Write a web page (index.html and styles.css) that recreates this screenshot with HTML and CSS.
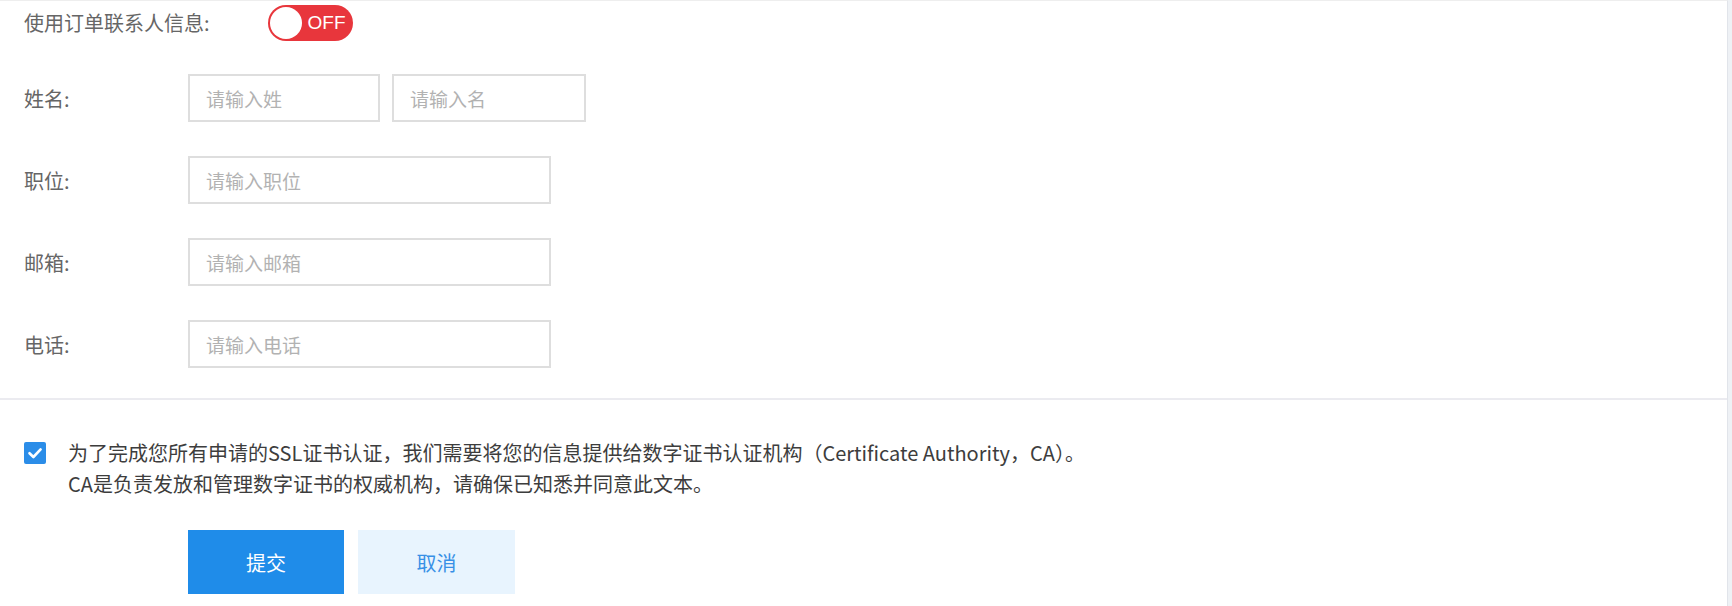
FILE: index.html
```html
<!DOCTYPE html>
<html lang="zh">
<head>
  <meta charset="UTF-8">
  <meta name="viewport" content="width=device-width, initial-scale=1.0">
  <title>联系人信息</title>
  <link rel="stylesheet" href="styles.css">
</head>
<body>
  <div class="page">
    <div class="panel">
      <section class="contactForm">
        <div class="switchRow">
          <span class="switchLabel">使用订单联系人信息:</span>
          <span class="switch">
            <span class="switchKnob"></span>
            <span class="switchText">OFF</span>
          </span>
        </div>

        <div class="formRow">
          <label class="fieldLabel">姓名:</label>
          <input class="textInput lastName" type="text" placeholder="请输入姓">
          <input class="textInput firstName" type="text" placeholder="请输入名">
        </div>

        <div class="formRow">
          <label class="fieldLabel">职位:</label>
          <input class="textInput wide" type="text" placeholder="请输入职位">
        </div>

        <div class="formRow">
          <label class="fieldLabel">邮箱:</label>
          <input class="textInput wide" type="text" placeholder="请输入邮箱">
        </div>

        <div class="formRow">
          <label class="fieldLabel">电话:</label>
          <input class="textInput wide" type="text" placeholder="请输入电话">
        </div>
      </section>

      <section class="agreement">
        <div class="agreeRow">
          <span class="checkbox">
            <svg width="22" height="22" viewBox="0 0 22 22">
              <path d="M5.5 11.2 L9.4 15 L16.6 7.4" fill="none" stroke="#fff" stroke-width="2.6" stroke-linecap="round" stroke-linejoin="round"/>
            </svg>
          </span>
          <p class="agreeText">
            为了完成您所有申请的SSL证书认证，我们需要将您的信息提供给数字证书认证机构（Certificate Authority，CA）。<br>
            CA是负责发放和管理数字证书的权威机构，请确保已知悉并同意此文本。
          </p>
        </div>

        <div class="actions">
          <button class="btn btnPrimary" type="button">提交</button>
          <button class="btn btnLight" type="button">取消</button>
        </div>
      </section>
    </div>
  </div>
</body>
</html>
```

FILE: styles.css
```css
html, body {
  margin: 0;
  padding: 0;
  background-color: #eef1f5;
  font-family: "Noto Sans CJK SC", "Noto Sans", sans-serif;
  color: #666666;
}

.page {
  display: flex;
  height: 606px;
  overflow: hidden;
}

.panel {
  width: 1727px;
  background-color: #ffffff;
  border-top: 1px solid #eeeeee;
  border-right: 1px solid #e1e4ea;
}

/* 联系人表单 */
.contactForm {
  padding: 4px 0 30px 24px;
}

.switchRow {
  display: flex;
  align-items: center;
  height: 36px;
  margin-bottom: 33px;
}

.switchLabel {
  width: 244px;
  font-size: 20px;
  line-height: 36px;
  color: #666666;
}

.switch {
  display: flex;
  align-items: center;
  width: 85px;
  height: 36px;
  padding: 2px;
  box-sizing: border-box;
  border-radius: 18px;
  background-color: #e8363c;
}

.switchKnob {
  width: 32px;
  height: 32px;
  border-radius: 50%;
  background-color: #ffffff;
}

.switchText {
  flex: 1;
  text-align: center;
  font-family: "Liberation Sans", Arial, sans-serif;
  font-size: 19px;
  color: #ffffff;
}

.formRow {
  display: flex;
  align-items: center;
  height: 48px;
  margin-bottom: 34px;
}

.formRow:last-child {
  margin-bottom: 0;
}

.fieldLabel {
  width: 164px;
  font-size: 20px;
  color: #666666;
}

.textInput {
  height: 48px;
  box-sizing: border-box;
  padding: 0 16px;
  border: 2px solid #dedede;
  border-radius: 0;
  outline: none;
  font-family: "Noto Sans CJK SC", "Noto Sans", sans-serif;
  font-size: 19px;
  color: #333333;
  background-color: #ffffff;
}

.textInput::placeholder {
  color: #b2b2b2;
}

.lastName {
  width: 192px;
  margin-right: 12px;
}

.firstName {
  width: 194px;
}

.wide {
  width: 363px;
}

/* 协议和按钮 */
.agreement {
  border-top: 2px solid #ebebf0;
  padding: 37px 0 0 24px;
  background-color: #ffffff;
  height: 206px;
}

.agreeRow {
  display: flex;
  align-items: flex-start;
}

.checkbox {
  width: 22px;
  height: 22px;
  margin-top: 5px;
  margin-right: 22px;
  border-radius: 2px;
  background-color: #2b8de8;
}

.checkbox svg {
  display: block;
}

.agreeText {
  margin: 0;
  font-size: 20px;
  line-height: 31px;
  color: #3d3d3d;
}

.actions {
  display: flex;
  margin: 31px 0 0 164px;
}

.btn {
  height: 64px;
  border: none;
  border-radius: 0;
  font-family: "Noto Sans CJK SC", "Noto Sans", sans-serif;
  font-size: 20px;
  cursor: pointer;
}

.btnPrimary {
  width: 156px;
  margin-right: 14px;
  background-color: #1f8ce9;
  color: #ffffff;
}

.btnLight {
  width: 157px;
  background-color: #e8f4fe;
  color: #3790e6;
}
```
